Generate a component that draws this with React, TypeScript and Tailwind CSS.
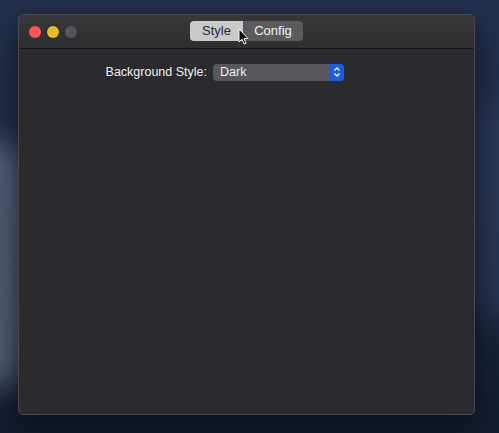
export default function App() {
  return (
    <div className="relative w-[499px] h-[433px] overflow-hidden bg-[linear-gradient(180deg,#22304e_0%,#1f2c48_40%,#141c30_100%)] pt-[14px] pl-[18px] font-['Liberation_Sans',sans-serif]">
      <div className="absolute left-[-40px] top-[140px] w-[70px] h-[250px] rounded-full bg-[#66718a] opacity-70 blur-[14px]" />
      <div className="absolute right-[-30px] top-[100px] w-[60px] h-[220px] rounded-full bg-[#2f3d5c] opacity-70 blur-[16px]" />
      <div className="relative w-[457px] h-[401px] flex flex-col rounded-[5px] border border-[#4a4a4c] bg-[#2b2a2f] overflow-hidden shadow-[0_10px_30px_rgba(0,0,0,0.5)]">
        <div className="h-[34px] shrink-0 flex items-center relative bg-gradient-to-b from-[#38373a] to-[#2e2d30] border-b border-[#161618]">
          <div className="flex items-center gap-[6px] pl-[10px]">
            <span className="w-[12px] h-[12px] rounded-full bg-[#fc5753]" />
            <span className="w-[12px] h-[12px] rounded-full bg-[#e6bb2c]" />
            <span className="w-[12px] h-[12px] rounded-full bg-[#55555a]" />
          </div>
          <div className="absolute left-[171px] top-[6px] flex h-[20px] rounded-[4px] overflow-hidden text-[13px]">
            <div className="w-[53px] flex items-center justify-center bg-[#c9cacb] text-[#2a2a2a]">Style</div>
            <div className="w-[60px] flex items-center justify-center bg-[#5b5b5e] text-[#f4f4f4]">Config</div>
          </div>
        </div>
        <div className="flex items-center pt-[14px] text-[12.5px] text-[#f0f0f0]">
          <span className="w-[188px] shrink-0 text-right whitespace-nowrap">Background Style:</span>
          <div className="ml-[6px] w-[131px] h-[17px] flex rounded-[4px] overflow-hidden bg-[#58575c]">
            <span className="flex-1 pl-[7px] leading-[17px] text-[#f0f0f0]">Dark</span>
            <span className="w-[14px] flex items-center justify-center bg-[#1d5ddc]">
              <svg width="8" height="12" viewBox="0 0 8 12" fill="none" stroke="#fff" strokeWidth="1.3">
                <path d="M1.5 4.5 L4 2 L6.5 4.5" />
                <path d="M1.5 7.5 L4 10 L6.5 7.5" />
              </svg>
            </span>
          </div>
        </div>
      </div>
      <svg className="absolute left-[238px] top-[28px]" width="11" height="17" viewBox="0 0 11 17">
        <path d="M1 1 L1 14 L4 11.2 L6 16 L8 15.2 L6 10.5 L10 10.5 Z" fill="#000" stroke="#fff" strokeWidth="1" />
      </svg>
    </div>
  );
}
